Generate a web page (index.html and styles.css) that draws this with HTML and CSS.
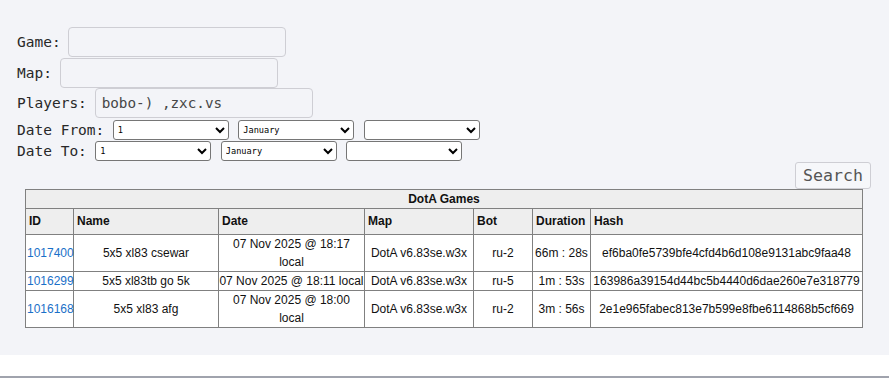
FILE: index.html
```html
<html>
<link rel="stylesheet" href="styles.css">
<head>
<title>DotA Games</title>
</head>
<body>

<div class='panel'>
  <form class='search'>
    <div class='field'>
      <label>Game:</label>
      <input class='text' type='text'/>
    </div>
    <div class='field'>
      <label>Map:</label>
      <input class='text' type='text'/>
    </div>
    <div class='field'>
      <label>Players:</label>
      <input class='text' type='text' value='bobo-) ,zxc.vs'/>
    </div>
    <div class='field date first'>
      <label>Date From:</label>
      <select><option>1</option></select>
      <select><option>January</option></select>
      <select><option></option></select>
    </div>
    <div class='field date'>
      <label>Date To:</label>
      <select><option>1</option></select>
      <select><option>January</option></select>
      <select><option></option></select>
    </div>
    <div class='actions'>
      <button type='button'>Search</button>
    </div>
  </form>

  <table class='games'>
    <colgroup>
      <col class='c-id'/>
      <col class='c-name'/>
      <col class='c-date'/>
      <col class='c-map'/>
      <col class='c-bot'/>
      <col class='c-dur'/>
      <col class='c-hash'/>
    </colgroup>
    <thead>
      <tr><th class='caption' colspan='7'>DotA Games</th></tr>
      <tr>
        <th>ID</th>
        <th>Name</th>
        <th>Date</th>
        <th>Map</th>
        <th>Bot</th>
        <th>Duration</th>
        <th>Hash</th>
      </tr>
    </thead>
    <tbody>
      <tr>
        <td class='id'><a href='#'>1017400</a></td>
        <td>5x5 xl83 csewar</td>
        <td>07 Nov 2025 @ 18:17<br>local</td>
        <td>DotA v6.83se.w3x</td>
        <td>ru-2</td>
        <td>66m : 28s</td>
        <td>ef6ba0fe5739bfe4cfd4b6d108e9131abc9faa48</td>
      </tr>
      <tr>
        <td class='id'><a href='#'>1016299</a></td>
        <td>5x5 xl83tb go 5k</td>
        <td class='single'>07 Nov 2025 @ 18:11 local</td>
        <td>DotA v6.83se.w3x</td>
        <td>ru-5</td>
        <td>1m : 53s</td>
        <td>163986a39154d44bc5b4440d6dae260e7e318779</td>
      </tr>
      <tr>
        <td class='id'><a href='#'>1016168</a></td>
        <td>5x5 xl83 afg</td>
        <td>07 Nov 2025 @ 18:00<br>local</td>
        <td>DotA v6.83se.w3x</td>
        <td>ru-2</td>
        <td>3m : 56s</td>
        <td>2e1e965fabec813e7b599e8fbe6114868b5cf669</td>
      </tr>
    </tbody>
  </table>
</div>

<div class='footer'></div>

</body>
</html>
```

FILE: styles.css
```css
html, body{
  margin:0px;
  padding:0px;
  background:rgb(255,255,255);
  overflow:hidden;
}
body{
  font-family:"DejaVu Sans Mono", monospace;
  color:rgb(40,40,40);
}

.panel{
  background:rgb(243,244,248);
  padding:27px 18px 27.5px 17px;
}

.search{
  display:flex;
  flex-direction:column;
  margin:0px;
}

.field{
  display:flex;
  align-items:center;
}
.field + .field{
  margin-top:0.7px;
}
.field label{
  font-size:14.5px;
  margin-right:7.8px;
  color:rgb(40,40,40);
}
.field .text{
  box-sizing:border-box;
  width:218px;
  height:30px;
  margin:0px;
  padding:0px 6px;

  font-family:"DejaVu Sans Mono", monospace;
  font-size:14.3px;
  color:rgb(70,70,70);

  background:transparent;
  border:1px solid rgb(206,206,212);
  border-radius:4px;
  outline:none;
}

.field.date{
  margin-top:1px;
}
.field.date.first{
  margin-top:2px;
}
.field.date label{
  margin-right:8.5px;
}
.field.date select{
  box-sizing:border-box;
  width:116px;
  height:20px;
  margin:0px;

  font-family:"DejaVu Sans Mono", monospace;
  font-size:8.6px;
  color:rgb(0,0,0);

  background:rgb(255,255,255);
  border:1px solid rgb(118,118,118);
  border-radius:3px;
}
.field.date select + select{
  margin-left:9.5px;
}

.actions{
  display:flex;
  justify-content:flex-end;
  margin-top:0.6px;
}
.actions button{
  box-sizing:border-box;
  width:76px;
  height:27px;
  padding:0px;

  font-family:"DejaVu Sans Mono", monospace;
  font-size:16.6px;
  color:rgb(85,85,85);

  background:rgb(246,247,250);
  border:1px solid rgb(206,206,212);
  border-radius:3px;
}

.games{
  table-layout:fixed;
  border-collapse:collapse;
  width:837px;
  margin:0px auto;

  font-family:"Liberation Sans", Arial, sans-serif;
  font-size:12px;
  line-height:18px;
  color:rgb(17,17,17);
  background:rgb(255,255,255);
}
.games .c-id{ width:48px; }
.games .c-name{ width:145px; }
.games .c-date{ width:146px; }
.games .c-map{ width:109px; }
.games .c-bot{ width:59px; }
.games .c-dur{ width:58px; }
.games .c-hash{ width:272px; }

.games th, .games td{
  border:1px solid rgb(128,128,128);
  overflow:visible;
}
.games th{
  background:rgb(238,238,238);
  font-weight:700;
  text-align:left;
  padding:3px 3px 4px 3px;
}
.games th.caption{
  text-align:center;
  padding:0px;
}
.games td{
  text-align:center;
  padding:0px;
}
.games td.single{
  white-space:nowrap;
}
.games td.id{
  text-align:left;
  padding-left:1px;
}
.games td.id a{
  color:rgb(26,112,200);
  text-decoration:none;
}

.footer{
  height:20.5px;
  border-bottom:2px solid rgb(160,163,173);
}
```
